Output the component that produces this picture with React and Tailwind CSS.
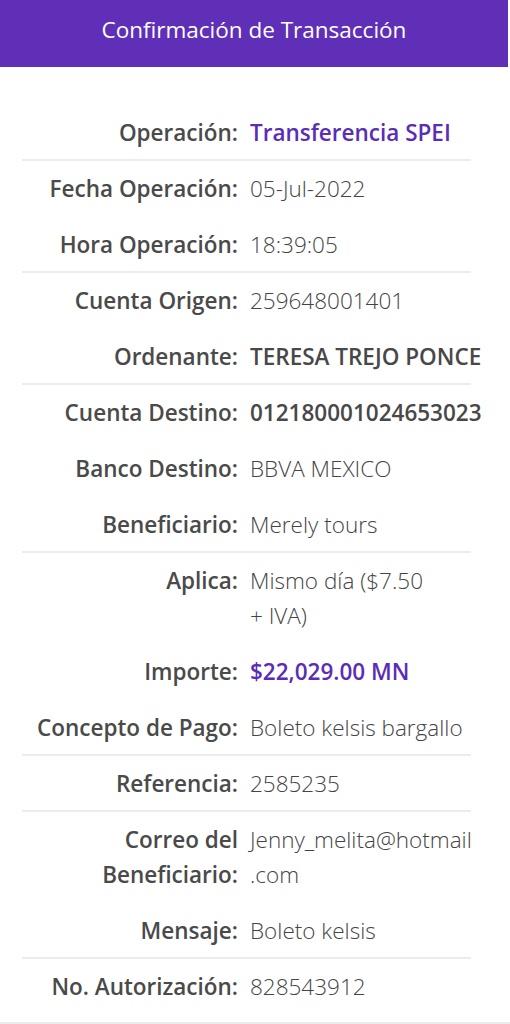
import React from "react";

const rows = [
  { label: "Operación:", value: "Transferencia SPEI", kind: "purple", border: true },
  { label: "Fecha Operación:", value: "05-Jul-2022" },
  { label: "Hora Operación:", value: "18:39:05", border: true },
  { label: "Cuenta Origen:", value: "259648001401" },
  { label: "Ordenante:", value: "TERESA TREJO PONCE", kind: "bold", border: true },
  { label: "Cuenta Destino:", value: "012180001024653023", kind: "bold" },
  { label: "Banco Destino:", value: "BBVA MEXICO" },
  { label: "Beneficiario:", value: "Merely tours", border: true },
  { label: "Aplica:", value: ["Mismo día ($7.50", "+ IVA)"] },
  { label: "Importe:", value: "$22,029.00 MN", kind: "purple" },
  { label: "Concepto de Pago:", value: "Boleto kelsis bargallo", border: true },
  { label: "Referencia:", value: "2585235", border: true },
  { label: ["Correo del", "Beneficiario:"], value: ["Jenny_melita@hotmail", ".com"] },
  { label: "Mensaje:", value: "Boleto kelsis", border: true },
  { label: "No. Autorización:", value: "828543912", full: true },
];

export default function App() {
  return (
    <div
      className="w-[510px] min-h-[1024px] bg-white"
      style={{ fontFamily: '"Open Sans", "Noto Sans", sans-serif' }}
    >
      <div className="mr-[2px] flex h-[67px] items-center justify-center bg-[#5f2fb8] pb-[7px] text-[22.5px] font-medium text-white">
        Confirmación de Transacción
      </div>
      <div className="pt-[38px]">
        {rows.map((r, i) => {
          const valueCls =
            r.kind === "purple"
              ? "font-semibold text-[#5b2db6]"
              : r.kind === "bold"
              ? "font-semibold text-[#484848]"
              : "font-light text-[#444444]";
          return (
            <div
              key={i}
              className={
                r.full
                  ? "border-b-2 border-[#ececec]"
                  : "ml-[22px] w-[449px] " +
                    (r.border ? "border-b-2 border-[#ececec]" : "border-b-2 border-transparent")
              }
            >
              <div
                className={
                  "flex items-start pt-[10px] text-[22.5px] leading-[35px] " +
                  (r.full ? "pb-[18px] pl-[22px]" : "pb-[9px]")
                }
              >
                <div className="w-[228px] shrink-0 pr-[12px] text-right font-semibold text-[#4a4a4a]">
                  {Array.isArray(r.label)
                    ? r.label.map((l, j) => <div key={j}>{l}</div>)
                    : r.label}
                </div>
                <div className={"w-[240px] shrink-0 whitespace-nowrap " + valueCls}>
                  {Array.isArray(r.value)
                    ? r.value.map((l, j) => <div key={j}>{l}</div>)
                    : r.value}
                </div>
              </div>
            </div>
          );
        })}
      </div>
    </div>
  );
}
